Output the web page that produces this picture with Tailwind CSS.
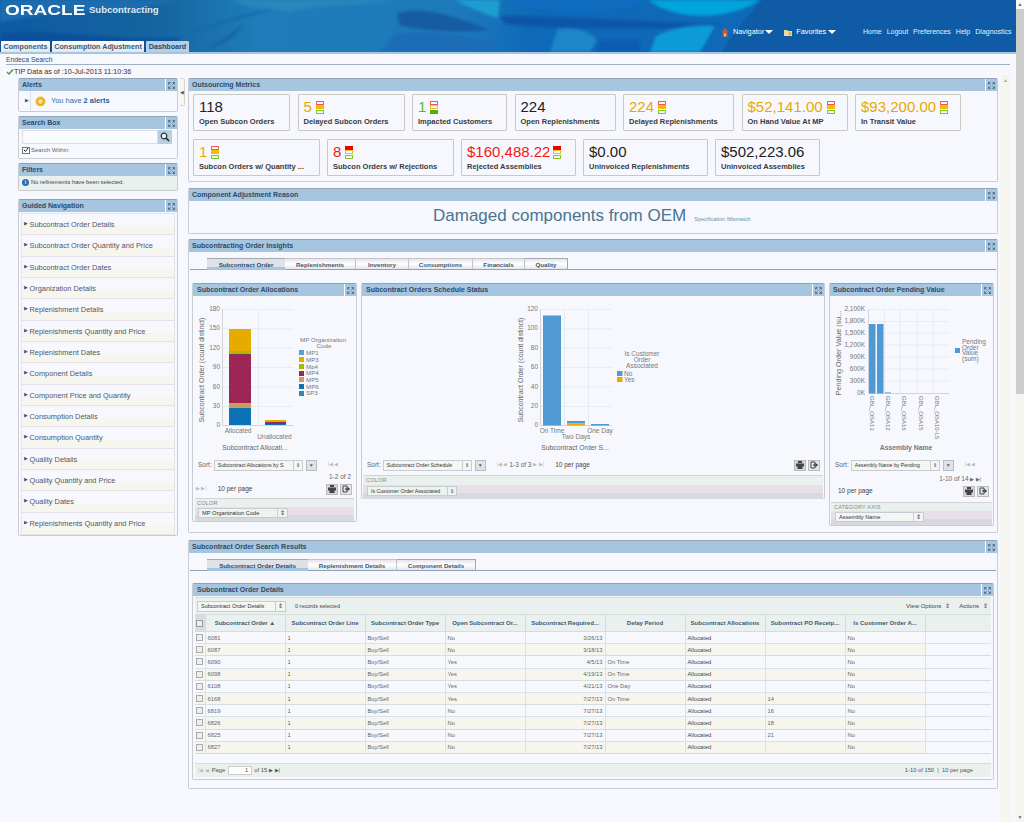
<!DOCTYPE html>
<html><head><meta charset="utf-8"><script src="https://cdn.jsdelivr.net/npm/@tailwindcss/browser@4"></script></head>
<body class="bg-[#f6f8fe] font-['Liberation_Sans',Arial,sans-serif] text-[#333] overflow-hidden">
<div class="relative w-[1024px] h-[822px] overflow-hidden">
  <!-- header -->
  <header class="relative h-[52px] bg-[#0f5ba6] overflow-hidden">
    <svg class="absolute inset-0" width="1024" height="52" viewBox="0 0 1024 52">
      <defs><filter id="b" x="-20%" y="-50%" width="140%" height="200%"><feGaussianBlur stdDeviation="1.500"/></filter>
      <linearGradient id="g" x1="0" y1="0" x2="1" y2="0"><stop offset="0" stop-color="#0f5aa4"/><stop offset=".15" stop-color="#14649f"/><stop offset=".25" stop-color="#1f7cb8"/><stop offset=".45" stop-color="#1c7abb"/><stop offset=".52" stop-color="#0f68b8"/><stop offset=".74" stop-color="#0f68b8"/></linearGradient></defs>
      <rect width="1024" height="52" fill="url(#g)"/>
      <g filter="url(#b)">
        <path d="M0 0H180L130 10 60 12 0 22Z" fill="#1a6db0"/>
        <path d="M0 34C60 28 120 42 180 38L170 52H0Z" fill="#0c4f9a"/>
        <path d="M275 8C250 14 215 22 185 36L215 26C240 18 260 14 275 8Z" fill="#1761a8"/>
        <path d="M245 22C235 34 215 42 205 50L225 42C235 36 240 30 245 22Z" fill="#1761a8"/>
        <path d="M230 0H400C360 6 320 4 290 12 265 8 240 6 230 0Z" fill="#2a86bc"/>
        <path d="M397 14C420 4 460 18 490 30 460 34 420 30 400 26Z" fill="#185ca2"/>
        <path d="M395 34C420 30 470 34 495 44L495 52H380Z" fill="#1a6cb6"/>
        <path d="M455 0H500L498 18C485 14 470 8 455 0Z" fill="#1c9ed0"/>
        <path d="M500 16C560 16 640 22 720 24L700 28C630 28 560 30 505 24Z" fill="#0e54a6"/>
        <path d="M510 0H645C640 8 600 14 560 12 540 10 520 6 510 0Z" fill="#0a6cc0"/>
        <path d="M648 0H760C735 18 680 24 648 0Z" fill="#00a4dc"/>
        <path d="M557 30C570 26 590 30 597 40L590 52H550Z" fill="#1a86c8"/>
        <path d="M600 40H640V52H595Z" fill="#0b5cb2"/>
        <path d="M656 36C670 28 700 24 715 26L700 52H650Z" fill="#0c9bd8"/>
      </g>
      <path d="M762 0H1024V52H722C730 38 745 18 762 0Z" fill="#0f5ba6"/>
    </svg>
    <div class="absolute left-[5px] top-[2px] flex items-center h-[16px] text-white">
      <span class="text-[14px] leading-[16px] font-bold inline-block origin-left scale-x-[1.36] w-[84px]">ORACLE</span>
      <span class="text-[9.500px] font-bold text-[#dfe9f3]">Subcontracting</span>
    </div>
    <div class="absolute left-[721px] top-[26px] flex items-center text-[7.300px] text-white leading-[12px]">
      <svg width="8" height="9" viewBox="0 0 8 9"><path d="M4 0 .5 4h1v4.500h5V4h1Z" fill="#c05a3a"/><rect x="3.200" y="5.500" width="1.600" height="3" fill="#f0d8a0"/></svg>
      <span class="ml-[4px]">Navigator</span><span class="ml-[1px] w-0 h-0 border-x-[4px] border-x-transparent border-t-[4px] border-t-white"></span>
      <svg class="ml-[10px]" width="10" height="9" viewBox="0 0 10 9"><path d="M1 2h3l1 1h4v5H1Z" fill="#e8d9a0"/><path d="M7 3.500l.6 1.200 1.300.2-1 .9.3 1.300-1.200-.7-1.200.7.3-1.300-1-.9 1.300-.2Z" fill="#e0a010"/></svg>
      <span class="ml-[3px]">Favorites</span><span class="ml-[2px] w-0 h-0 border-x-[4px] border-x-transparent border-t-[4px] border-t-white"></span>
    </div>
    <nav class="absolute left-[863px] top-[26px] flex gap-[5px] text-[7px] text-[#e8f0f8] leading-[12px]"><span>Home</span><span>Logout</span><span>Preferences</span><span>Help</span><span>Diagnostics</span></nav>
    <div class="absolute left-0 bottom-0 flex items-end h-[11px] text-[7.200px] font-bold text-[#3f5872] leading-[11px] pl-[1px] whitespace-nowrap">
      <span class="w-[49px] text-center rounded-t-[1px] bg-gradient-to-b from-white to-[#dfe6ec]">Components</span>
      <span class="ml-[2px] w-[92px] text-center rounded-t-[1px] bg-gradient-to-b from-white to-[#dfe6ec]">Consumption Adjustment</span>
      <span class="ml-[2px] w-[43px] text-center rounded-t-[1px] bg-[#b5cfe4] text-[#26486e]">Dashboard</span>
    </div>
  </header>
  <div class="h-[2px] bg-[#a6c5de]"></div>

  <div class="ml-[6px] mr-[14px] h-[11px] pt-[1px] border-b border-[#9fb0c4] text-[6.800px] leading-[9px] text-[#2a4a72]">Endeca Search</div>
  <div class="ml-[6px] h-[13px] flex items-center text-[7.200px] leading-[10px] text-[#333]">
    <svg width="8" height="6" viewBox="0 0 8 6"><path d="M1 3l2 2 4-4.500" fill="none" stroke="#4a9a3a" stroke-width="1.300"/></svg><span>TIP Data as of :10-Jul-2013 11:10:36</span>
  </div>

  <main class="flex items-start">
    <!-- sidebar -->
    <aside class="ml-[18px] w-[160px] flex flex-col shrink-0">
      <section class="h-[34px] border border-[#c9cdd2] rounded-[2px] border-t-[#8ea2b8]">
        <div class="h-[12px] bg-[#a6c5de] flex items-center justify-between text-[7px] font-bold text-[#2f4a68] pl-[3px]"><span>Alerts</span><span class="w-[12px] h-[12px] border-l border-white flex items-center justify-center"><svg width="7" height="7" viewBox="0 0 7 7"><path d="M0.500 2.500V.5h2M4.500.5h2v2M.5 4.500v2h2M4.500 6.500h2v-2M1 1l1.500 1.500M6 1L4.500 2.500M1 6l1.500-1.500M6 6L4.500 4.500" fill="none" stroke="#4f6a82" stroke-width=".9"/></svg></span></div>
        <div class="flex items-center h-[20px]">
          <span class="w-[12px] pl-[6px] h-full flex items-center border-r border-[#d8e0e8] text-[5px] text-[#555]">&#9654;</span>
          <svg class="ml-[4px]" width="11" height="11" viewBox="0 0 11 11"><circle cx="5.500" cy="5.500" r="5" fill="#f3bf2c"/><circle cx="5.500" cy="5.500" r="3" fill="#fbe48e" stroke="#c98a10" stroke-width=".8"/></svg>
          <span class="ml-[5px] text-[7.400px] text-[#2b6ea8]">You have <b class="text-[#1f5f98]">2 alerts</b></span>
        </div>
      </section>
      <section class="mt-[4px] h-[43px] border border-[#c9cdd2] rounded-[2px] border-t-[#8ea2b8]">
        <div class="h-[12px] bg-[#a6c5de] flex items-center justify-between text-[7px] font-bold text-[#2f4a68] pl-[3px]"><span>Search Box</span><span class="w-[12px] h-[12px] border-l border-white flex items-center justify-center"><svg width="7" height="7" viewBox="0 0 7 7"><path d="M0.500 2.500V.5h2M4.500.5h2v2M.5 4.500v2h2M4.500 6.500h2v-2M1 1l1.500 1.500M6 1L4.500 2.500M1 6l1.500-1.500M6 6L4.500 4.500" fill="none" stroke="#4f6a82" stroke-width=".9"/></svg></span></div>
        <div class="flex mt-[1px] ml-[3px] h-[14px] w-[150px]">
          <div class="flex-1 border border-[#e0dce4] bg-[#fafbff]"></div>
          <div class="w-[14px] bg-[#b9cfe0] flex items-center justify-center"><svg width="10" height="10" viewBox="0 0 10 10"><circle cx="4" cy="4" r="2.800" fill="#e8f0f6" stroke="#334" stroke-width="1.200"/><path d="M6 6l3 3" stroke="#222" stroke-width="1.600"/></svg></div>
        </div>
        <div class="flex items-center ml-[3px] mt-[1px] text-[6px] text-[#666] leading-[10px]"><span class="w-[8px] h-[7px] border border-[#777] bg-white flex items-center justify-center mr-[1px]"><svg width="6" height="6" viewBox="0 0 6 6"><path d="M1 3l1.500 1.500L5 1" fill="none" stroke="#222" stroke-width="1"/></svg></span>Search Within</div>
      </section>
      <section class="mt-[4px] h-[28px] border border-[#c9cdd2] rounded-[2px] border-t-[#8ea2b8] bg-[#e9f0ee]">
        <div class="h-[12px] bg-[#a6c5de] flex items-center justify-between text-[7px] font-bold text-[#2f4a68] pl-[3px]"><span>Filters</span><span class="w-[12px] h-[12px] border-l border-white flex items-center justify-center"><svg width="7" height="7" viewBox="0 0 7 7"><path d="M0.500 2.500V.5h2M4.500.5h2v2M.5 4.500v2h2M4.500 6.500h2v-2M1 1l1.500 1.500M6 1L4.500 2.500M1 6l1.500-1.500M6 6L4.500 4.500" fill="none" stroke="#4f6a82" stroke-width=".9"/></svg></span></div>
        <div class="flex items-center h-[12px] ml-[3px] text-[5.800px] text-[#444]"><span class="w-[7px] h-[7px] rounded-full bg-[#2b6cb0] text-white text-[5px] leading-[7px] text-center font-bold mr-[2px]">i</span>No refinements have been selected.</div>
      </section>
      <section class="mt-[8px] h-[337px] border border-[#c9cdd2] rounded-[2px] border-t-[#8ea2b8]">
        <div class="h-[12px] bg-[#a6c5de] flex items-center justify-between text-[7px] font-bold text-[#2f4a68] pl-[3px]"><span>Guided Navigation</span><span class="w-[12px] h-[12px] border-l border-white flex items-center justify-center"><svg width="7" height="7" viewBox="0 0 7 7"><path d="M0.500 2.500V.5h2M4.500.5h2v2M.5 4.500v2h2M4.500 6.500h2v-2M1 1l1.500 1.500M6 1L4.500 2.500M1 6l1.500-1.500M6 6L4.500 4.500" fill="none" stroke="#4f6a82" stroke-width=".9"/></svg></span></div>
        <ul class="mx-[2px] mt-[1px] border border-[#e4e4ea] text-[7.400px] text-[#55555c] leading-[11px]">
          <li class="h-[21.330px] pl-[2px] pt-[4px] border-b border-[#e6dfe8] bg-[linear-gradient(#f7f8fd_62%,#f7f6ee_62%)]"><span class="text-[4.500px] mr-[1.500px] align-[1.500px]">&#9654;</span>Subcontract Order Details</li>
          <li class="h-[21.330px] pl-[2px] pt-[4px] border-b border-[#e6dfe8] bg-[linear-gradient(#f7f8fd_62%,#f7f6ee_62%)]"><span class="text-[4.500px] mr-[1.500px] align-[1.500px]">&#9654;</span>Subcontract Order Quantity and Price</li>
          <li class="h-[21.330px] pl-[2px] pt-[4px] border-b border-[#e6dfe8] bg-[linear-gradient(#f7f8fd_62%,#f7f6ee_62%)]"><span class="text-[4.500px] mr-[1.500px] align-[1.500px]">&#9654;</span>Subcontract Order Dates</li>
          <li class="h-[21.330px] pl-[2px] pt-[4px] border-b border-[#e6dfe8] bg-[linear-gradient(#f7f8fd_62%,#f7f6ee_62%)]"><span class="text-[4.500px] mr-[1.500px] align-[1.500px]">&#9654;</span>Organization Details</li>
          <li class="h-[21.330px] pl-[2px] pt-[4px] border-b border-[#e6dfe8] bg-[linear-gradient(#f7f8fd_62%,#f7f6ee_62%)]"><span class="text-[4.500px] mr-[1.500px] align-[1.500px]">&#9654;</span>Replenishment Details</li>
          <li class="h-[21.330px] pl-[2px] pt-[4px] border-b border-[#e6dfe8] bg-[linear-gradient(#f7f8fd_62%,#f7f6ee_62%)]"><span class="text-[4.500px] mr-[1.500px] align-[1.500px]">&#9654;</span>Replenishments Quantity and Price</li>
          <li class="h-[21.330px] pl-[2px] pt-[4px] border-b border-[#e6dfe8] bg-[linear-gradient(#f7f8fd_62%,#f7f6ee_62%)]"><span class="text-[4.500px] mr-[1.500px] align-[1.500px]">&#9654;</span>Replenishment Dates</li>
          <li class="h-[21.330px] pl-[2px] pt-[4px] border-b border-[#e6dfe8] bg-[linear-gradient(#f7f8fd_62%,#f7f6ee_62%)]"><span class="text-[4.500px] mr-[1.500px] align-[1.500px]">&#9654;</span>Component Details</li>
          <li class="h-[21.330px] pl-[2px] pt-[4px] border-b border-[#e6dfe8] bg-[linear-gradient(#f7f8fd_62%,#f7f6ee_62%)]"><span class="text-[4.500px] mr-[1.500px] align-[1.500px]">&#9654;</span>Component Price and Quantity</li>
          <li class="h-[21.330px] pl-[2px] pt-[4px] border-b border-[#e6dfe8] bg-[linear-gradient(#f7f8fd_62%,#f7f6ee_62%)]"><span class="text-[4.500px] mr-[1.500px] align-[1.500px]">&#9654;</span>Consumption Details</li>
          <li class="h-[21.330px] pl-[2px] pt-[4px] border-b border-[#e6dfe8] bg-[linear-gradient(#f7f8fd_62%,#f7f6ee_62%)]"><span class="text-[4.500px] mr-[1.500px] align-[1.500px]">&#9654;</span>Consumption Quantity</li>
          <li class="h-[21.330px] pl-[2px] pt-[4px] border-b border-[#e6dfe8] bg-[linear-gradient(#f7f8fd_62%,#f7f6ee_62%)]"><span class="text-[4.500px] mr-[1.500px] align-[1.500px]">&#9654;</span>Quality Details</li>
          <li class="h-[21.330px] pl-[2px] pt-[4px] border-b border-[#e6dfe8] bg-[linear-gradient(#f7f8fd_62%,#f7f6ee_62%)]"><span class="text-[4.500px] mr-[1.500px] align-[1.500px]">&#9654;</span>Quality Quantity and Price</li>
          <li class="h-[21.330px] pl-[2px] pt-[4px] border-b border-[#e6dfe8] bg-[linear-gradient(#f7f8fd_62%,#f7f6ee_62%)]"><span class="text-[4.500px] mr-[1.500px] align-[1.500px]">&#9654;</span>Quality Dates</li>
          <li class="h-[21.330px] pl-[2px] pt-[4px] bg-[linear-gradient(#f7f8fd_62%,#f7f6ee_62%)]"><span class="text-[4.500px] mr-[1.500px] align-[1.500px]">&#9654;</span>Replenishments Quantity and Price</li>
        </ul>
      </section>
    </aside>

    <!-- collapse handle -->
    <div class="ml-[2px] w-[5px] h-[28px] border border-l-0 border-[#d5d5cf] rounded-r-[2px] bg-[#f7f6ee] flex items-center justify-center text-[5px] text-[#555] leading-none">&#9664;</div>

    <!-- content -->
    <div class="ml-[3px] w-[810px] flex flex-col">
      <section class="h-[104px] border border-[#c9cdd2] rounded-[2px] border-t-[#8ea2b8]">
        <div class="h-[12px] bg-[#a6c5de] flex items-center justify-between text-[7px] font-bold text-[#2f4a68] pl-[3px]"><span>Outsourcing Metrics</span><span class="w-[12px] h-[12px] border-l border-white flex items-center justify-center"><svg width="7" height="7" viewBox="0 0 7 7"><path d="M0.500 2.500V.5h2M4.500.5h2v2M.5 4.500v2h2M4.500 6.500h2v-2M1 1l1.500 1.500M6 1L4.500 2.500M1 6l1.500-1.500M6 6L4.500 4.500" fill="none" stroke="#4f6a82" stroke-width=".9"/></svg></span></div>
        <div class="flex flex-wrap gap-x-[7.500px] gap-y-[8px] pl-[4px] pt-[3px] text-[7.500px] font-bold leading-[10px] text-[#3a3a3a]">
          <div class="w-[97px] h-[37px] border border-[#c9c9c4] rounded-[1px] pl-[5px] pt-[2px]"><div class="flex items-center h-[20px] text-[15px] font-normal text-[#222]">118</div>Open Subcon Orders</div>
          <div class="w-[107px] h-[37px] border border-[#c9c9c4] rounded-[1px] pl-[5px] pt-[2px]"><div class="flex items-center h-[20px] text-[15px] font-normal text-[#e8a800]">5<span class="ml-[4px] flex flex-col gap-[.5px]"><i class="block w-[8px] h-[4px] border border-[#f05a5a]"></i><i class="block w-[8px] h-[4px] bg-[#f0c000]"></i><i class="block w-[8px] h-[4px] border border-[#7ec820]"></i></span></div>Delayed Subcon Orders</div>
          <div class="w-[95px] h-[37px] border border-[#c9c9c4] rounded-[1px] pl-[5px] pt-[2px]"><div class="flex items-center h-[20px] text-[15px] font-normal text-[#5cb82a]">1<span class="ml-[4px] flex flex-col gap-[.5px]"><i class="block w-[8px] h-[4px] border border-[#f05a5a]"></i><i class="block w-[8px] h-[4px] border border-[#e8c020]"></i><i class="block w-[8px] h-[4px] bg-[#58b000]"></i></span></div>Impacted Customers</div>
          <div class="w-[101px] h-[37px] border border-[#c9c9c4] rounded-[1px] pl-[5px] pt-[2px]"><div class="flex items-center h-[20px] text-[15px] font-normal text-[#222]">224</div>Open Replenishments</div>
          <div class="w-[111px] h-[37px] border border-[#c9c9c4] rounded-[1px] pl-[5px] pt-[2px]"><div class="flex items-center h-[20px] text-[15px] font-normal text-[#e8a800]">224<span class="ml-[4px] flex flex-col gap-[.5px]"><i class="block w-[8px] h-[4px] border border-[#f05a5a]"></i><i class="block w-[8px] h-[4px] bg-[#f0c000]"></i><i class="block w-[8px] h-[4px] border border-[#7ec820]"></i></span></div>Delayed Replenishments</div>
          <div class="w-[106px] h-[37px] border border-[#c9c9c4] rounded-[1px] pl-[5px] pt-[2px]"><div class="flex items-center h-[20px] text-[15px] font-normal text-[#e8a800]">$52,141.00<span class="ml-[4px] flex flex-col gap-[.5px]"><i class="block w-[8px] h-[4px] border border-[#f05a5a]"></i><i class="block w-[8px] h-[4px] bg-[#f0c000]"></i><i class="block w-[8px] h-[4px] border border-[#7ec820]"></i></span></div>On Hand Value At MP</div>
          <div class="w-[106px] h-[37px] border border-[#c9c9c4] rounded-[1px] pl-[5px] pt-[2px]"><div class="flex items-center h-[20px] text-[15px] font-normal text-[#e8a800]">$93,200.00<span class="ml-[4px] flex flex-col gap-[.5px]"><i class="block w-[8px] h-[4px] border border-[#f05a5a]"></i><i class="block w-[8px] h-[4px] bg-[#f0c000]"></i><i class="block w-[8px] h-[4px] border border-[#7ec820]"></i></span></div>In Transit Value</div>
          <div class="w-[126.500px] h-[37px] border border-[#c9c9c4] rounded-[1px] pl-[5px] pt-[2px]"><div class="flex items-center h-[20px] text-[15px] font-normal text-[#e8a800]">1<span class="ml-[4px] flex flex-col gap-[.5px]"><i class="block w-[8px] h-[4px] border border-[#f05a5a]"></i><i class="block w-[8px] h-[4px] bg-[#f0c000]"></i><i class="block w-[8px] h-[4px] border border-[#7ec820]"></i></span></div>Subcon Orders w/ Quantity ...</div>
          <div class="w-[126.500px] h-[37px] border border-[#c9c9c4] rounded-[1px] pl-[5px] pt-[2px]"><div class="flex items-center h-[20px] text-[15px] font-normal text-[#f01818]">8<span class="ml-[4px] flex flex-col gap-[.5px]"><i class="block w-[8px] h-[4px] bg-[#f00000]"></i><i class="block w-[8px] h-[4px] border border-[#e8c020]"></i><i class="block w-[8px] h-[4px] border border-[#7ec820]"></i></span></div>Subcon Orders w/ Rejections</div>
          <div class="w-[114.500px] h-[37px] border border-[#c9c9c4] rounded-[1px] pl-[5px] pt-[2px]"><div class="flex items-center h-[20px] text-[15px] font-normal text-[#f01818]">$160,488.22<span class="ml-[3px] flex flex-col gap-[.5px]"><i class="block w-[8px] h-[4px] bg-[#f00000]"></i><i class="block w-[8px] h-[4px] border border-[#e8c020]"></i><i class="block w-[8px] h-[4px] border border-[#7ec820]"></i></span></div>Rejected Assemblies</div>
          <div class="w-[124.500px] h-[37px] border border-[#c9c9c4] rounded-[1px] pl-[5px] pt-[2px]"><div class="flex items-center h-[20px] text-[15px] font-normal text-[#222]">$0.00</div>Uninvoiced Replenishments</div>
          <div class="w-[105px] h-[37px] border border-[#c9c9c4] rounded-[1px] pl-[5px] pt-[2px]"><div class="flex items-center h-[20px] text-[15px] font-normal text-[#222]">$502,223.06</div>Uninvoiced Assemblies</div>
        </div>
      </section>

      <section class="mt-[6px] h-[46px] border border-[#c9cdd2] rounded-[2px] border-t-[#8ea2b8]">
        <div class="h-[12px] bg-[#a6c5de] flex items-center justify-between text-[7px] font-bold text-[#2f4a68] pl-[3px]"><span>Component Adjustment Reason</span><span class="w-[12px] h-[12px] border-l border-white flex items-center justify-center"><svg width="7" height="7" viewBox="0 0 7 7"><path d="M0.500 2.500V.5h2M4.500.5h2v2M.5 4.500v2h2M4.500 6.500h2v-2M1 1l1.500 1.500M6 1L4.500 2.500M1 6l1.500-1.500M6 6L4.500 4.500" fill="none" stroke="#4f6a82" stroke-width=".9"/></svg></span></div>
        <div class="flex items-baseline pl-[244px] pt-[4px]"><span class="text-[17px] leading-[22px] text-[#4a7590]">Damaged components from OEM</span><span class="ml-[8px] text-[5.500px] text-[#6a90a8]">Specification Mismatch</span></div>
      </section>

      <section class="mt-[5px] h-[294px] border border-[#c9cdd2] rounded-[2px] border-t-[#8ea2b8]">
        <div class="h-[12px] bg-[#a6c5de] flex items-center justify-between text-[7px] font-bold text-[#2f4a68] pl-[3px]"><span>Subcontracting Order Insights</span><span class="w-[12px] h-[12px] border-l border-white flex items-center justify-center"><svg width="7" height="7" viewBox="0 0 7 7"><path d="M0.500 2.500V.5h2M4.500.5h2v2M.5 4.500v2h2M4.500 6.500h2v-2M1 1l1.500 1.500M6 1L4.500 2.500M1 6l1.500-1.500M6 6L4.500 4.500" fill="none" stroke="#4f6a82" stroke-width=".9"/></svg></span></div>
        <div class="mt-[6px] mx-[1px] h-[12px] border-b border-[#8ea2b8] flex pl-[17px] text-[6.200px] font-bold text-[#3f5872] leading-[11px]">
          <span class="w-[78px] h-[12px] text-center bg-[linear-gradient(#dfe1e6_75%,#a6c5de_75%)] border-t border-[#a0a8b0] text-[#26486e]">Subcontract Order</span>
          <span class="w-[71px] text-center bg-gradient-to-b from-[#e8e4ec] via-white to-[#e4e6e8] border-t border-r border-[#c0c4c8]">Replenishments</span>
          <span class="w-[53px] text-center bg-gradient-to-b from-[#e8e4ec] via-white to-[#e4e6e8] border-t border-r border-[#c0c4c8]">Inventory</span>
          <span class="w-[64px] text-center bg-gradient-to-b from-[#e8e4ec] via-white to-[#e4e6e8] border-t border-r border-[#c0c4c8]">Consumptions</span>
          <span class="w-[52px] text-center bg-gradient-to-b from-[#e8e4ec] via-white to-[#e4e6e8] border-t border-r border-[#c0c4c8]">Financials</span>
          <span class="w-[43px] text-center bg-gradient-to-b from-[#e8e4ec] via-white to-[#e4e6e8] border-t border-r border-[#a0a8b0]">Quality</span>
        </div>
        <div class="flex items-start mt-[13px] ml-[3px] gap-[4px]">
          <!-- chart 1 -->
          <div class="w-[165px] h-[239px] border border-[#c9cdd2] rounded-[2px] border-t-[#8ea2b8]">
            <div class="h-[12px] bg-[#a6c5de] flex items-center justify-between text-[7px] font-bold text-[#2f4a68] pl-[4px]"><span>Subcontract Order Allocations</span><span class="w-[12px] h-[12px] border-l border-white flex items-center justify-center"><svg width="7" height="7" viewBox="0 0 7 7"><path d="M0.500 2.500V.5h2M4.500.5h2v2M.5 4.500v2h2M4.500 6.500h2v-2M1 1l1.500 1.500M6 1L4.500 2.500M1 6l1.500-1.500M6 6L4.500 4.500" fill="none" stroke="#4f6a82" stroke-width=".9"/></svg></span></div>
            <svg class="block" width="163" height="157" viewBox="193 296 163 157" font-family="Liberation Sans" font-size="6.500" fill="#777">
              <g stroke="#dfe9ee" stroke-width=".7"><path d="M222 309.500H293M222 329H293M222 348H293M222 367.500H293M222 387H293M222 406.500H293M258.500 309V425"/></g>
              <path d="M222.500 309V425.500H293.500" fill="none" stroke="#c5ccd4" stroke-width=".8"/>
              <rect x="229" y="329" width="22" height="22" fill="#e6ab00"/>
              <rect x="229" y="351" width="22" height="3" fill="#a0be00"/>
              <rect x="229" y="354" width="22" height="49" fill="#9c2757"/>
              <rect x="229" y="403" width="22" height="5" fill="#cc9c62"/>
              <rect x="229" y="408" width="22" height="17" fill="#0a72b5"/>
              <rect x="265" y="420" width="21" height="2" fill="#e6ab00"/><rect x="265" y="422" width="21" height="2" fill="#9c2757"/><rect x="265" y="424" width="21" height="1" fill="#0a72b5"/>
              <g text-anchor="end"><text x="220" y="311">180</text><text x="220" y="330">150</text><text x="220" y="350">120</text><text x="220" y="369">90</text><text x="220" y="389">60</text><text x="220" y="408">30</text><text x="220" y="427">0</text></g>
              <text transform="translate(204 370) rotate(-90)" text-anchor="middle" font-size="7" fill="#666">Subcontract Order (count distinct)</text>
              <text x="238" y="433" text-anchor="middle">Allocated</text><text x="274.500" y="439" text-anchor="middle">Unallocated</text>
              <text x="255" y="450" text-anchor="middle" font-size="6.800" fill="#666">Subcontract Allocati...</text>
              <g text-anchor="middle" font-size="6.200"><text x="323" y="342">MP Organization</text><text x="324" y="348">Code</text></g>
              <g font-size="6.200"><rect x="299" y="350" width="5" height="5" fill="#5aa0d8"/><text x="306" y="355">MP1</text><rect x="299" y="357" width="5" height="5" fill="#e6ab00"/><text x="306" y="361.500">MP3</text><rect x="299" y="364" width="5" height="5" fill="#a0be00"/><text x="306" y="368.500">Mp4</text><rect x="299" y="371" width="5" height="5" fill="#9c2757"/><text x="306" y="375">MP4</text><rect x="299" y="377" width="5" height="5" fill="#cc9c62"/><text x="306" y="382">MP5</text><rect x="299" y="384" width="5" height="5" fill="#0a72b5"/><text x="306" y="388.500">MP6</text><rect x="299" y="391" width="5" height="5" fill="#2c86c0"/><text x="306" y="395">SP3</text></g>
            </svg>
            <div class="mt-[5px] flex items-center h-[14px] ml-[5px] text-[6.500px] text-[#666] whitespace-nowrap">Sort:<span class="ml-[2px] w-[89px] h-[11px] border border-[#c8ccd0] bg-[#f4f6f4] text-[5.200px] text-[#333] pl-[3px] leading-[9px] flex justify-between overflow-hidden">Subcontract Allocations by S<i class="not-italic border-l border-[#c8ccd0] px-[2px]">&#8661;</i></span><span class="ml-[3px] w-[11px] h-[11px] border border-[#b8bcc0] bg-[#dfe3e6] text-[5px] leading-[9px] text-center">&#9660;</span><span class="ml-[11px] text-[5px] text-[#bbb]">|&#9664; &#9664;</span></div>
            <div class="h-[11px] pr-[5px] text-right text-[6.500px] text-[#666] leading-[9px]">1-2 of 2</div>
            <div class="flex items-center h-[12px] ml-[3px] text-[6.500px] text-[#444]"><span class="text-[5px] text-[#bbb]">&#9654; &#9654;|</span><span class="ml-[11px]">10 per page</span><span class="ml-auto mr-[4px] flex gap-[2px]"><i class="w-[12px] h-[11px] border border-[#bbb] bg-[#d5d8da] flex items-center justify-center"><svg width="8" height="8" viewBox="0 0 8 8"><path d="M2 0h4v2H2zM0 2.500h8v3H6.500V8h-5V5.500H0z" fill="#444"/></svg></i><i class="w-[12px] h-[11px] border border-[#bbb] bg-[#e4e7e8] flex items-center justify-center"><svg width="8" height="8" viewBox="0 0 8 8"><path d="M1 1h4v6H1z" fill="none" stroke="#444"/><path d="M3 4h4M5.500 2.500L7.500 4l-2 1.500" fill="none" stroke="#222"/></svg></i></span></div>
            <div class="mt-[3px] mx-[2px] h-[23px] border-t border-[#d0d4d4] bg-[linear-gradient(#e9f0ee_38%,#e8dfe8_38%,#e8dfe8_72%,#d6d9de_72%)] relative"><div class="text-[5.500px] text-[#888] leading-[8px] pl-[2px] tracking-[0.2px]">COLOR</div><span class="absolute left-[3px] top-[9px] w-[90px] h-[10px] border border-[#c8ccd0] bg-[#eef3f0] text-[5.700px] text-[#333] pl-[3px] leading-[8px] flex justify-between whitespace-nowrap overflow-hidden">MP Organization Code<i class="not-italic border-l border-[#c8ccd0] px-[2px]">&#8661;</i></span></div>
          </div>
          <!-- chart 2 -->
          <div class="w-[464px] h-[216px] border border-[#c9cdd2] rounded-[2px] border-t-[#8ea2b8]">
            <div class="h-[12px] bg-[#a6c5de] flex items-center justify-between text-[7px] font-bold text-[#2f4a68] pl-[4px]"><span>Subcontract Orders Schedule Status</span><span class="w-[12px] h-[12px] border-l border-white flex items-center justify-center"><svg width="7" height="7" viewBox="0 0 7 7"><path d="M0.500 2.500V.5h2M4.500.5h2v2M.5 4.500v2h2M4.500 6.500h2v-2M1 1l1.500 1.500M6 1L4.500 2.500M1 6l1.500-1.500M6 6L4.500 4.500" fill="none" stroke="#4f6a82" stroke-width=".9"/></svg></span></div>
            <svg class="block" width="462" height="157" viewBox="362 296 462 157" font-family="Liberation Sans" font-size="6.500" fill="#777">
              <g stroke="#dfe9ee" stroke-width=".7"><path d="M540 309.500H612M540 329H612M540 348H612M540 367.500H612M540 387H612M540 406.500H612M564.500 309V425M588.500 309V425"/></g>
              <path d="M540.500 309V425.500H612" fill="none" stroke="#c5ccd4" stroke-width=".8"/>
              <rect x="543" y="315.500" width="18" height="110" fill="#4f9ad4"/>
              <rect x="567" y="421" width="18" height="2.500" fill="#4f9ad4"/><rect x="567" y="423.500" width="18" height="2" fill="#e6ab00"/>
              <rect x="591" y="424" width="18" height="1.500" fill="#4f9ad4"/>
              <g text-anchor="end"><text x="538" y="311">120</text><text x="538" y="330">100</text><text x="538" y="350">80</text><text x="538" y="369">60</text><text x="538" y="389">40</text><text x="538" y="408">20</text><text x="538" y="427">0</text></g>
              <text transform="translate(523 370) rotate(-90)" text-anchor="middle" font-size="7" fill="#666">Subcontract Order (count distinct)</text>
              <text x="552" y="433" text-anchor="middle">On Time</text><text x="576" y="439" text-anchor="middle">Two Days</text><text x="600" y="433" text-anchor="middle">One Day</text>
              <text x="575" y="450" text-anchor="middle" font-size="6.800" fill="#666">Subcontract Order S...</text>
              <g text-anchor="middle"><text x="642" y="356">Is Customer</text><text x="642" y="362">Order</text><text x="642" y="368">Associated</text></g>
              <rect x="617" y="371" width="5.500" height="5" fill="#4f9ad4"/><text x="624" y="375.500">No</text><rect x="617" y="377" width="5.500" height="5" fill="#e6ab00"/><text x="624" y="381.500">Yes</text>
            </svg>
            <div class="mt-[5px] flex items-center h-[14px] ml-[5px] text-[6.500px] text-[#666] whitespace-nowrap">Sort:<span class="ml-[2px] w-[89px] h-[11px] border border-[#c8ccd0] bg-[#f4f6f4] text-[5.200px] text-[#333] pl-[3px] leading-[9px] flex justify-between overflow-hidden">Subcontract Order Schedule<i class="not-italic border-l border-[#c8ccd0] px-[2px]">&#8661;</i></span><span class="ml-[3px] w-[11px] h-[11px] border border-[#b8bcc0] bg-[#dfe3e6] text-[5px] leading-[9px] text-center">&#9660;</span><span class="ml-[11px] text-[5px] text-[#bbb]">|&#9664; &#9664;</span><span class="ml-[2px]">1-3 of 3</span><span class="ml-[2px] text-[5px] text-[#bbb]">&#9654; &#9654;|</span><span class="ml-[11px] text-[#444]">10 per page</span><span class="ml-auto mr-[4px] flex gap-[2px]"><i class="w-[12px] h-[11px] border border-[#bbb] bg-[#d5d8da] flex items-center justify-center"><svg width="8" height="8" viewBox="0 0 8 8"><path d="M2 0h4v2H2zM0 2.500h8v3H6.500V8h-5V5.500H0z" fill="#444"/></svg></i><i class="w-[12px] h-[11px] border border-[#bbb] bg-[#e4e7e8] flex items-center justify-center"><svg width="8" height="8" viewBox="0 0 8 8"><path d="M1 1h4v6H1z" fill="none" stroke="#444"/><path d="M3 4h4M5.500 2.500L7.500 4l-2 1.500" fill="none" stroke="#222"/></svg></i></span></div>
            <div class="mt-[3px] mx-[1px] h-[24px] border-t border-[#d0d4d4] bg-[linear-gradient(#e9f0ee_38%,#e8dfe8_38%,#e8dfe8_72%,#d6d9de_72%)] relative"><div class="text-[5.500px] text-[#888] leading-[8px] pl-[3px] tracking-[0.2px]">COLOR</div><span class="absolute left-[4px] top-[10px] w-[90px] h-[10px] border border-[#c8ccd0] bg-[#eef3f0] text-[5.200px] text-[#333] pl-[3px] leading-[8px] flex justify-between whitespace-nowrap overflow-hidden">Is Customer Order Associated<i class="not-italic border-l border-[#c8ccd0] px-[2px]">&#8661;</i></span></div>
          </div>
          <!-- chart 3 -->
          <div class="w-[165px] h-[243px] border border-[#c9cdd2] rounded-[2px] border-t-[#8ea2b8]">
            <div class="h-[12px] bg-[#a6c5de] flex items-center justify-between text-[7px] font-bold text-[#2f4a68] pl-[3px]"><span>Subcontract Order Pending Value</span><span class="w-[12px] h-[12px] border-l border-white flex items-center justify-center"><svg width="7" height="7" viewBox="0 0 7 7"><path d="M0.500 2.500V.5h2M4.500.5h2v2M.5 4.500v2h2M4.500 6.500h2v-2M1 1l1.500 1.500M6 1L4.500 2.500M1 6l1.500-1.500M6 6L4.500 4.500" fill="none" stroke="#4f6a82" stroke-width=".9"/></svg></span></div>
            <svg class="block" width="163" height="157" viewBox="830 296 163 157" font-family="Liberation Sans" font-size="6.500" fill="#777">
              <g stroke="#dfe9ee" stroke-width=".7"><path d="M868 309.500H949M868 321.500H949M868 333H949M868 345H949M868 357H949M868 369H949M868 381H949M884.500 309V393M900 309V393M917 309V393M933 309V393"/></g>
              <path d="M868.500 309V393.500H949" fill="none" stroke="#c5ccd4" stroke-width=".8"/>
              <rect x="869" y="324" width="6.500" height="69.500" fill="#4f9ad4"/><rect x="877" y="324" width="6.500" height="69.500" fill="#4f9ad4"/><rect x="885" y="392" width="6" height="1.500" fill="#8fc0e4"/>
              <g text-anchor="end"><text x="865" y="311">2,100K</text><text x="865" y="323">1,800K</text><text x="865" y="335">1,500K</text><text x="865" y="347">1,200K</text><text x="865" y="359">900K</text><text x="865" y="371">600K</text><text x="865" y="383">300K</text><text x="865" y="395">0K</text></g>
              <text transform="translate(841 353) rotate(-90)" text-anchor="middle" font-size="7.200" fill="#666">Pending Order Value (su...</text>
              <g font-size="6"><text transform="translate(870 396) rotate(90)">GBL_OSA13</text><text transform="translate(886 396) rotate(90)">GBL_OSA12</text><text transform="translate(902 396) rotate(90)">GBL_OSA16</text><text transform="translate(919 396) rotate(90)">GBL_OSA15</text><text transform="translate(935 396) rotate(90)">GBL_OSA10-L5</text></g>
              <text x="906" y="450" text-anchor="middle" font-size="6.800" font-weight="bold" fill="#777">Assembly Name</text>
              <rect x="955" y="348" width="5" height="5" fill="#4f9ad4"/><g><text x="962" y="344">Pending</text><text x="962" y="350">Order</text><text x="962" y="355">Value</text><text x="962" y="361">(sum)</text></g>
            </svg>
            <div class="mt-[5px] flex items-center h-[14px] ml-[5px] text-[6.500px] text-[#666] whitespace-nowrap">Sort:<span class="ml-[2px] w-[89px] h-[11px] border border-[#c8ccd0] bg-[#f4f6f4] text-[5.200px] text-[#333] pl-[3px] leading-[9px] flex justify-between overflow-hidden">Assembly Name by Pending<i class="not-italic border-l border-[#c8ccd0] px-[2px]">&#8661;</i></span><span class="ml-[3px] w-[11px] h-[11px] border border-[#b8bcc0] bg-[#dfe3e6] text-[5px] leading-[9px] text-center">&#9660;</span><span class="ml-[11px] text-[5px] text-[#bbb]">|&#9664; &#9664;</span></div>
            <div class="h-[12px] pr-[12px] pt-[2px] text-right text-[6.500px] text-[#666] leading-[9px]">1-10 of 14 <span class="text-[5px]">&#9654; &#9654;|</span></div>
            <div class="flex items-center h-[14px] ml-[8px] text-[6.500px] text-[#444]"><span>10 per page</span><span class="ml-auto mr-[4px] flex gap-[2px]"><i class="w-[12px] h-[11px] border border-[#bbb] bg-[#d5d8da] flex items-center justify-center"><svg width="8" height="8" viewBox="0 0 8 8"><path d="M2 0h4v2H2zM0 2.500h8v3H6.500V8h-5V5.500H0z" fill="#444"/></svg></i><i class="w-[12px] h-[11px] border border-[#bbb] bg-[#e4e7e8] flex items-center justify-center"><svg width="8" height="8" viewBox="0 0 8 8"><path d="M1 1h4v6H1z" fill="none" stroke="#444"/><path d="M3 4h4M5.500 2.500L7.500 4l-2 1.500" fill="none" stroke="#222"/></svg></i></span></div>
            <div class="mt-[4px] mx-[1px] h-[23px] border-t border-[#d0d4d4] bg-[linear-gradient(#e9f0ee_38%,#e8dfe8_38%,#e8dfe8_72%,#d6d9de_72%)] relative"><div class="text-[5.500px] text-[#888] leading-[8px] pl-[3px] tracking-[0.2px]">CATEGORY AXIS</div><span class="absolute left-[4px] top-[9px] w-[89px] h-[10px] border border-[#c8ccd0] bg-[#f4f6f4] text-[5.700px] text-[#333] pl-[3px] leading-[8px] flex justify-between whitespace-nowrap overflow-hidden">Assembly Name<i class="not-italic border-l border-[#c8ccd0] px-[2px]">&#8661;</i></span></div>
          </div>
        </div>
      </section>

      <!-- results -->
      <section class="mt-[7px] h-[249px] border border-[#c9cdd2] rounded-[2px] border-t-[#8ea2b8]">
        <div class="h-[12px] bg-[#a6c5de] flex items-center justify-between text-[7px] font-bold text-[#2f4a68] pl-[3px]"><span>Subcontract Order Search Results</span><span class="w-[12px] h-[12px] border-l border-white flex items-center justify-center"><svg width="7" height="7" viewBox="0 0 7 7"><path d="M0.500 2.500V.5h2M4.500.5h2v2M.5 4.500v2h2M4.500 6.500h2v-2M1 1l1.500 1.500M6 1L4.500 2.500M1 6l1.500-1.500M6 6L4.500 4.500" fill="none" stroke="#4f6a82" stroke-width=".9"/></svg></span></div>
        <div class="mt-[6px] mx-[1px] h-[12px] border-b border-[#8ea2b8] flex pl-[17px] text-[6.200px] font-bold text-[#3f5872] leading-[11px]">
          <span class="w-[101px] h-[12px] text-center bg-[linear-gradient(#dfe1e6_75%,#a6c5de_75%)] border-t border-[#a0a8b0] text-[#26486e]">Subcontract Order Details</span>
          <span class="w-[89px] text-center bg-gradient-to-b from-[#e8e4ec] via-white to-[#e4e6e8] border-t border-r border-[#c0c4c8]">Replenishment Details</span>
          <span class="w-[79px] text-center bg-gradient-to-b from-[#e8e4ec] via-white to-[#e4e6e8] border-t border-r border-[#a0a8b0]">Component Details</span>
        </div>
        <div class="mt-[12px] ml-[3px] w-[802px] h-[197px] border border-[#c9cdd2] rounded-[2px] border-t-[#8ea2b8]">
          <div class="h-[12px] bg-[#a6c5de] flex items-center justify-between text-[7px] font-bold text-[#2f4a68] pl-[4px]"><span>Subcontract Order Details</span><span class="w-[12px] h-[12px] border-l border-white flex items-center justify-center"><svg width="7" height="7" viewBox="0 0 7 7"><path d="M0.500 2.500V.5h2M4.500.5h2v2M.5 4.500v2h2M4.500 6.500h2v-2M1 1l1.500 1.500M6 1L4.500 2.500M1 6l1.500-1.500M6 6L4.500 4.500" fill="none" stroke="#4f6a82" stroke-width=".9"/></svg></span></div>
          <div class="mx-[2px] mt-[1px] h-[17px] bg-[#e9f0ee] flex items-center text-[5.500px] text-[#444] border-t border-[#d5dcdc]">
            <span class="ml-[2px] w-[89px] h-[11px] border border-[#c8ccd0] bg-[#f4f6f4] text-[5.500px] text-[#333] pl-[3px] leading-[9px] flex justify-between whitespace-nowrap overflow-hidden">Subcontract Order Details<i class="not-italic border-l border-[#c8ccd0] px-[2px]">&#8661;</i></span>
            <span class="ml-[9px]">0 records selected</span>
            <span class="ml-auto text-[6px]">View Options</span><span class="ml-[4px] text-[6px]">&#8661;</span><span class="ml-[9px] text-[6px]">Actions</span><span class="ml-[4px] mr-[3px] text-[6px]">&#8661;</span>
          </div>
          <div class="mx-[2px] h-[149px] relative">
            <table class="table-fixed border-collapse text-[5.800px] text-[#666] leading-[10px]">
              <colgroup><col class="w-[10px]"><col class="w-[80px]"><col class="w-[80px]"><col class="w-[80px]"><col class="w-[80px]"><col class="w-[80px]"><col class="w-[80px]"><col class="w-[80px]"><col class="w-[80px]"><col class="w-[80px]"><col class="w-[66px]"></colgroup>
              <thead class="bg-[#e9f0ee] text-[6px] font-bold text-[#3f5872]"><tr class="h-[17px] border-t border-b border-[#d4dcdc]">
                <th class="bg-[#d8dde2] border-r border-[#d4dcdc]"><span class="block mx-auto w-[7px] h-[7px] border border-[#999] bg-[#eee]"></span></th>
                <th class="font-bold border-r border-[#d4dcdc]">Subcontract Order &#9650;</th><th class="font-bold border-r border-[#d4dcdc]">Subcontract Order Line</th><th class="font-bold border-r border-[#d4dcdc]">Subcontract Order Type</th><th class="font-bold border-r border-[#d4dcdc]">Open Subcontract Or...</th><th class="font-bold border-r border-[#d4dcdc]">Subcontract Required...</th><th class="font-bold border-r border-[#d4dcdc]">Delay Period</th><th class="font-bold border-r border-[#d4dcdc]">Subcontract Allocations</th><th class="font-bold border-r border-[#d4dcdc]">Subontract PO Receip...</th><th class="font-bold border-r border-[#d4dcdc]">Is Customer Order A...</th><th></th>
              </tr></thead>
              <tbody class="[&_td]:border-r [&_td]:border-[#d6e2ea] [&_td]:pl-[2px]">
                <tr class="h-[12.200px] border-b border-[#d6e2ea]"><td class="!pl-0"><span class="block mx-auto w-[7px] h-[7px] border border-[#aaa] bg-[#eee]"></span></td><td>6081</td><td>1</td><td>Buy/Sell</td><td>No</td><td class="text-right pr-[2px]">3/26/13</td><td></td><td class="text-[#444]">Allocated</td><td></td><td>No</td></tr>
                <tr class="h-[12.200px] border-b border-[#d6dde0] bg-[#f7f6ee]"><td class="!pl-0"><span class="block mx-auto w-[7px] h-[7px] border border-[#aaa] bg-[#eee]"></span></td><td>6087</td><td>1</td><td>Buy/Sell</td><td>No</td><td class="text-right pr-[2px]">3/18/13</td><td></td><td class="text-[#444]">Allocated</td><td></td><td>No</td></tr>
                <tr class="h-[12.200px] border-b border-[#d6e2ea]"><td class="!pl-0"><span class="block mx-auto w-[7px] h-[7px] border border-[#aaa] bg-[#eee]"></span></td><td>6090</td><td>1</td><td>Buy/Sell</td><td>Yes</td><td class="text-right pr-[2px]">4/5/13</td><td>On Time</td><td class="text-[#444]">Allocated</td><td></td><td>No</td></tr>
                <tr class="h-[12.200px] border-b border-[#d6dde0] bg-[#f7f6ee]"><td class="!pl-0"><span class="block mx-auto w-[7px] h-[7px] border border-[#aaa] bg-[#eee]"></span></td><td>6098</td><td>1</td><td>Buy/Sell</td><td>Yes</td><td class="text-right pr-[2px]">4/19/13</td><td>On Time</td><td class="text-[#444]">Allocated</td><td></td><td>No</td></tr>
                <tr class="h-[12.200px] border-b border-[#d6e2ea]"><td class="!pl-0"><span class="block mx-auto w-[7px] h-[7px] border border-[#aaa] bg-[#eee]"></span></td><td>6108</td><td>1</td><td>Buy/Sell</td><td>Yes</td><td class="text-right pr-[2px]">4/21/13</td><td>One Day</td><td class="text-[#444]">Allocated</td><td></td><td>No</td></tr>
                <tr class="h-[12.200px] border-b border-[#d6dde0] bg-[#f7f6ee]"><td class="!pl-0"><span class="block mx-auto w-[7px] h-[7px] border border-[#aaa] bg-[#eee]"></span></td><td>6168</td><td>1</td><td>Buy/Sell</td><td>Yes</td><td class="text-right pr-[2px]">7/27/13</td><td>On Time</td><td class="text-[#444]">Allocated</td><td>14</td><td>No</td></tr>
                <tr class="h-[12.200px] border-b border-[#d6e2ea]"><td class="!pl-0"><span class="block mx-auto w-[7px] h-[7px] border border-[#aaa] bg-[#eee]"></span></td><td>6819</td><td>1</td><td>Buy/Sell</td><td>No</td><td class="text-right pr-[2px]">7/27/13</td><td></td><td class="text-[#444]">Allocated</td><td>16</td><td>No</td></tr>
                <tr class="h-[12.200px] border-b border-[#d6dde0] bg-[#f7f6ee]"><td class="!pl-0"><span class="block mx-auto w-[7px] h-[7px] border border-[#aaa] bg-[#eee]"></span></td><td>6826</td><td>1</td><td>Buy/Sell</td><td>No</td><td class="text-right pr-[2px]">7/27/13</td><td></td><td class="text-[#444]">Allocated</td><td>18</td><td>No</td></tr>
                <tr class="h-[12.200px] border-b border-[#d6e2ea]"><td class="!pl-0"><span class="block mx-auto w-[7px] h-[7px] border border-[#aaa] bg-[#eee]"></span></td><td>6825</td><td>1</td><td>Buy/Sell</td><td>No</td><td class="text-right pr-[2px]">7/27/13</td><td></td><td class="text-[#444]">Allocated</td><td>21</td><td>No</td></tr>
                <tr class="h-[12.200px] border-b border-[#d6dde0] bg-[#f7f6ee]"><td class="!pl-0"><span class="block mx-auto w-[7px] h-[7px] border border-[#aaa] bg-[#eee]"></span></td><td>6827</td><td>1</td><td>Buy/Sell</td><td>No</td><td class="text-right pr-[2px]">7/27/13</td><td></td><td class="text-[#444]">Allocated</td><td></td><td>No</td></tr>
              </tbody>
            </table>
          </div>
          <div class="mx-[2px] h-[14px] bg-[#e9f0ee] flex items-center text-[5.800px] text-[#555] border-t border-[#d4dcdc]">
            <span class="ml-[3px] text-[5px] text-[#bbb]">|&#9664; &#9664;</span><span class="ml-[3px]">Page</span><span class="ml-[3px] w-[24px] h-[9px] bg-white border border-[#ccc] text-right pr-[3px] leading-[7px]">1</span><span class="ml-[2px]">of 15</span><span class="ml-[2px] text-[5px]">&#9654; &#9654;|</span>
            <span class="ml-auto mr-[18px]">1-10 of 150 &nbsp;|&nbsp; 10 per page</span>
          </div>
        </div>
      </section>
    </div>

    <!-- inner scrollbar -->
    <div class="ml-[3px] -mt-[3px] w-[9px] h-[747px] bg-[#f7f6ee] text-[5px] text-center text-[#aaa] leading-[10px]">&#9650;</div>
  </main>
  <!-- outer scrollbar -->
  <div class="absolute right-0 top-0 bottom-0 w-[8px] bg-[#f7f6ee] flex flex-col">
    <div class="h-[9px] bg-[#fafafa] text-[5px] text-center text-[#666] leading-[9px]">&#9650;</div>
    <div class="h-[385px] bg-[#cdcdcd]"></div>
    <div class="flex-1"></div>
    <div class="h-[9px] text-[5px] text-center text-[#666] leading-[9px]">&#9660;</div>
  </div>
</div>
</body></html>
